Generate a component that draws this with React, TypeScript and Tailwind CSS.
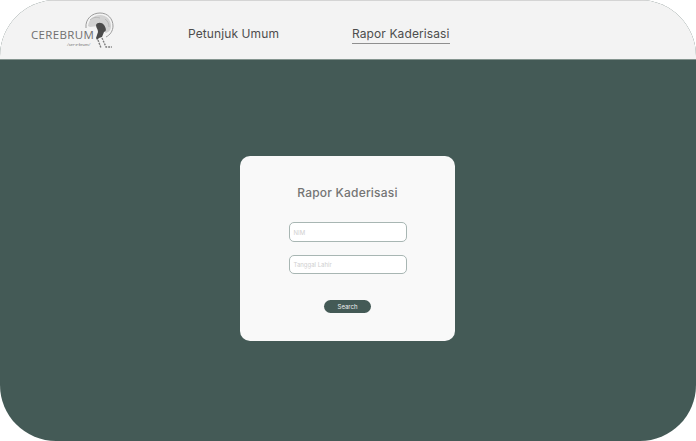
export default function App() {
  return (
    <div className="w-[696px] h-[441px] bg-white overflow-hidden font-['Inter','Liberation_Sans',sans-serif]">
      <div className="w-full h-full rounded-[56px] overflow-hidden bg-[#445a56] flex flex-col">
        <header className="h-[60px] shrink-0 bg-[#f3f3f3] border-t border-[#d4d4d4] border-b border-b-[#84948f] flex items-center">
          <div className="w-[188px] shrink-0 pl-[30px] flex items-center">
            <div className="relative w-[90px] h-[44px] mt-[2px]">
              <span className="absolute left-[1px] top-[18px] text-[11.5px] leading-[15px] tracking-[0.35px] text-[#6f6f6f] font-['Open_Sans',sans-serif]">CEREBRUM</span>
              <span className="absolute left-[37px] top-[33px] text-[4.5px] leading-[5px] italic text-[#777777] font-['Lato',sans-serif]">/ser·e·brum/</span>
              <svg className="absolute left-[53px] top-[1px]" width="34" height="42" viewBox="0 0 34 40" fill="none">
                <path d="M3 17 C2 8 9 2 17 2 C25 2 30 8 30 15 C30 20 27 24 23 26" stroke="#9c9c9c" strokeWidth="1" />
                <path d="M5 15 C6 8 11 4 17 4 C24 4 28 9 28 15 C28 19 26 21 23 22 L15 15 L7 16 Z" fill="#d2d2d2" />
                <path d="M7 9 C10 6 14 6 17 7 M22 8 C25 10 26 13 26 16" stroke="#b0b0b0" strokeWidth="0.8" />
                <path d="M13 14 C14 11 19 11 21 14 C23 17 24 20 21 21 L19 26 L16 27 L14 29 L13 27 L15 21 C15 18 13 17 13 14 Z" fill="#4b4b4b" />
                <path d="M15 29 L18 37 M19 27 L23 36 L29 36" stroke="#7d7d7d" strokeWidth="1.4" strokeDasharray="2 1" />
              </svg>
            </div>
          </div>
          <nav className="flex items-start h-[22px] mt-[13px] text-[12px] leading-[16px] text-[#4d4d4d]">
            <a className="w-[164px] tracking-[0.1px]">Petunjuk Umum</a>
            <a className="border-b border-[#8f8f8f] pb-[1px] tracking-[0.1px]">Rapor Kaderisasi</a>
          </nav>
        </header>
        <main className="flex-1 flex justify-start pl-[240px] pt-[96px]">
          <form className="w-[215px] h-[185px] rounded-[10px] bg-[#f9f9f9] flex flex-col items-center pt-[28px]">
            <h1 className="text-[12px] leading-[18px] font-medium tracking-[0.2px] text-[#747474]">Rapor Kaderisasi</h1>
            <div className="mt-[20px] w-[118px] h-[20px] rounded-[5px] border border-[#a8b6b3] bg-white px-[4px] flex items-center text-[6px] text-[#cfcfcf]">NIM</div>
            <div className="mt-[13px] w-[118px] h-[19px] rounded-[5px] border border-[#a8b6b3] bg-white px-[4px] flex items-center text-[6px] text-[#cfcfcf]">Tanggal Lahir</div>
            <button type="button" className="mt-[26px] w-[47px] h-[13px] rounded-full bg-[#445a56] text-[6px] leading-[13px] text-[#f0f0f0]">Search</button>
          </form>
        </main>
      </div>
    </div>
  );
}
